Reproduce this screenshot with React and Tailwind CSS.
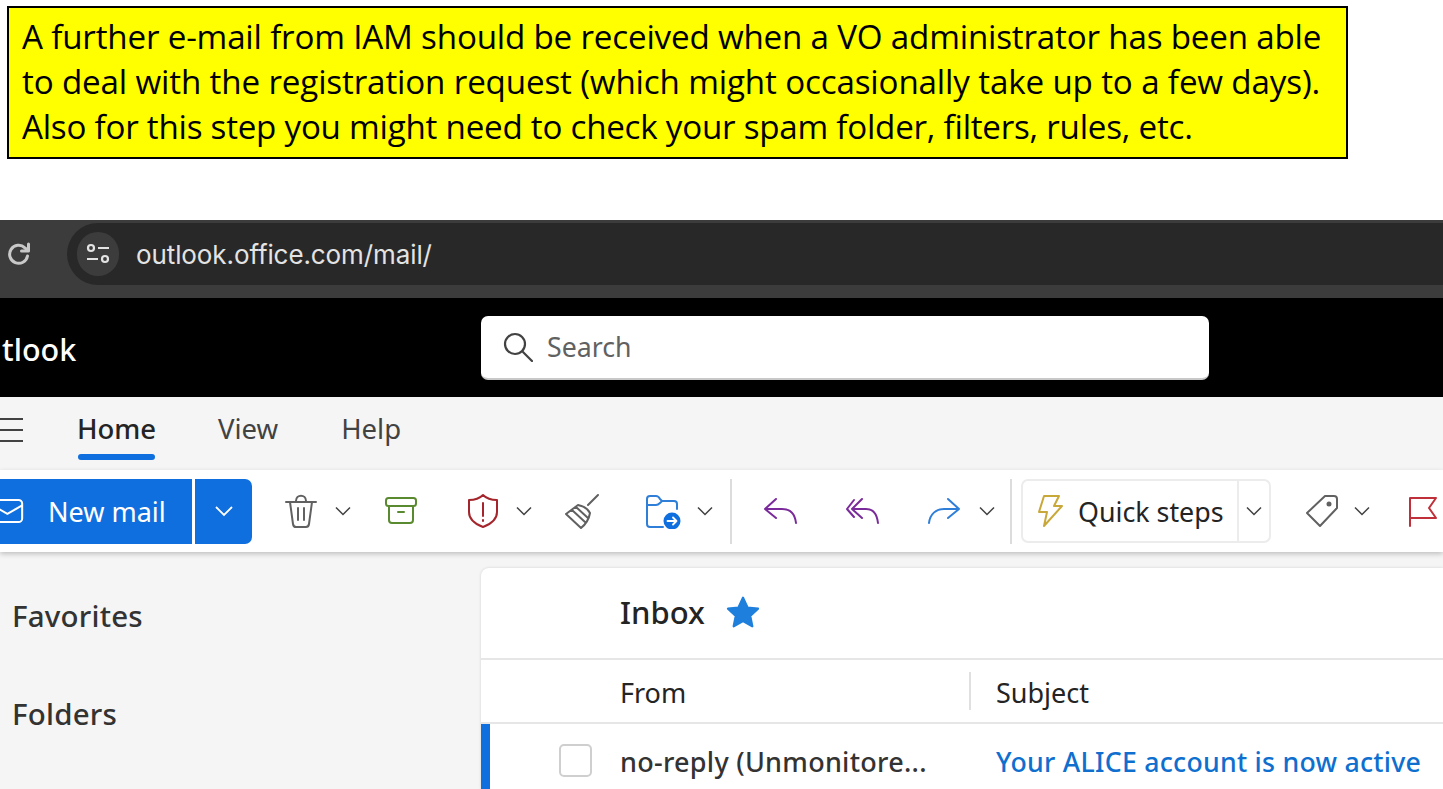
const Chevron = ({ className = 'ml-[17px]', color = '#424242' }) => (
  <svg viewBox="0 0 18 12" className={`h-[12px] w-[18px] shrink-0 ${className}`} fill="none" stroke={color} strokeWidth="1.5">
    <path d="M2 2.5 9 9.5 16 2.5" />
  </svg>
);

const Icon = ({ children, w = 36, h = 36, className = '' }) => (
  <svg viewBox={`0 0 ${w} ${h}`} style={{ width: w, height: h }} className={`shrink-0 ${className}`} fill="none" strokeWidth="2" strokeLinecap="round" strokeLinejoin="round">
    {children}
  </svg>
);

const App = () => (
  <div className="h-[789px] w-[1443px] overflow-hidden bg-white" style={{ fontFamily: '"Noto Sans", "Open Sans", sans-serif' }}>
    <div className="h-[220px] pl-[7px] pt-[6px]">
      <div className="h-[153px] w-[1341px] border-2 border-black bg-[#ffff00] pl-[13px] pt-[6px] text-[33.2px] leading-[45px] text-black whitespace-nowrap" style={{ fontFamily: '"Open Sans", sans-serif' }}>
        <div className="tracking-[-0.2px]">A further e-mail from IAM should be received when a VO administrator has been able</div>
        <div className="tracking-[-0.16px]">to deal with the registration request (which might occasionally take up to a few days).</div>
        <div className="tracking-[-0.25px]">Also for this step you might need to check your spam folder, filters, rules, etc.</div>
      </div>
    </div>

    <div className="flex h-[78px] items-start bg-[#3c3c3c] pt-[3px]">
      <Icon w={24} h={24} className="ml-[7px] mt-[19px]">
        <g stroke="#c9c9c9" strokeWidth="3">
          <path d="M20.5 14a9 9 0 1 1-2.6-8.2L21 8.5" />
          <path d="M21.5 2v7h-7" />
        </g>
      </Icon>
      <div className="ml-[36px] flex h-[62px] flex-1 items-center rounded-l-[31px] bg-[#282828] pl-[10px]">
        <div className="grid h-[44px] w-[42px] place-items-center rounded-full bg-[#3c3c3c]">
          <svg viewBox="0 0 26 22" className="h-[22px] w-[26px]" fill="none" stroke="#e3e3e3" strokeWidth="2.2">
            <circle cx="6" cy="5" r="3" />
            <path d="M13 5h11M2 16h11" />
            <circle cx="20" cy="16" r="3" />
          </svg>
        </div>
        <span className="ml-[17px] text-[26px] tracking-[-0.1px] text-[#e3e3e3]" style={{ fontFamily: 'Inter, sans-serif' }}>outlook.office.com/mail/</span>
      </div>
    </div>

    <div className="flex h-[99px] items-center bg-black">
      <span className="w-[481px] pl-[2px] pt-[4px] text-[30.500px] font-medium text-white">tlook</span>
      <div className="flex h-[64px] w-[728px] items-center rounded-[7px] border-b-2 border-[#c8c8c8] bg-white pl-[22px]">
        <svg viewBox="0 0 30 30" className="h-[30px] w-[30px]" fill="none" stroke="#424242" strokeWidth="2.2" strokeLinecap="round">
          <circle cx="12" cy="12" r="10" />
          <path d="M19.5 19.5 29 29" />
        </svg>
        <span className="ml-[14px] pt-[2px] text-[26.700px] text-[#616161]">Search</span>
      </div>
    </div>

    <div className="flex h-[73px] items-start bg-[#f5f5f5] text-[27.500px] text-[#424242]">
      <div className="mt-[21px] flex h-[24px] w-[23px] flex-col justify-between">
        <div className="h-[2px] bg-[#424242]" />
        <div className="h-[2px] bg-[#424242]" />
        <div className="h-[2px] bg-[#424242]" />
      </div>
      <div className="ml-[55px] flex h-[63px] w-[77px] flex-col items-center">
        <span className="mt-[11px] text-[27.500px] font-medium text-[#242424]">Home</span>
        <div className="mt-[5px] h-[6px] w-[77px] shrink-0 rounded-[3px] bg-[#0f6fde]" />
      </div>
      <span className="ml-[63px] mt-[11px]">View</span>
      <span className="ml-[63px] mt-[11px]">Help</span>
    </div>

    <div className="relative z-10 flex h-[82px] items-center bg-white shadow-[0_2px_5px_rgba(0,0,0,0.22)]">
      <div className="flex h-[65px] w-[192px] items-center bg-[#0f6fde] text-[27px] text-white">
        <svg viewBox="0 0 26 28" className="h-[28px] w-[24px] shrink-0" fill="none" stroke="#fff" strokeWidth="2.2">
          <rect x="-8" y="2" width="32" height="24" rx="4" />
          <path d="M-8 8 8 17 24 8" />
        </svg>
        <span className="ml-[24px] pt-[2px]">New mail</span>
      </div>
      <div className="ml-[3px] grid h-[65px] w-[57px] place-items-center rounded-r-[7px] bg-[#0f6fde]">
        <svg viewBox="0 0 20 12" className="h-[12px] w-[20px]" fill="none" stroke="#fff" strokeWidth="1.8"><path d="M2 2 10 10 18 2" /></svg>
      </div>

      <Icon w={34} h={36} className="ml-[32px]">
        <g stroke="#616161">
          <path d="M2 9h30M12 8c0-7 10-7 10 0M6 9l3 22c.3 2 1.5 3 3 3h10c1.500 0 2.700-1 3-3l3-22M14 15v12M20 15v12" />
        </g>
      </Icon>
      <Chevron className="ml-[16px]" />
      <Icon w={34} h={30} className="ml-[32px]">
        <g stroke="#5a8a2f">
          <rect x="2" y="2" width="30" height="8" rx="2.500" />
          <path d="M5 10v14c0 2 1 3 3 3h18c2 0 3-1 3-3V10M14 16h6" />
        </g>
      </Icon>
      <Icon w={32} h={36} className="ml-[49px]">
        <g stroke="#a4262c">
          <path d="M16 2c4 4 8 5 14 5v12c0 7-6 12-14 15C8 31 2 26 2 19V7c6 0 10-1 14-5ZM16 10v13M16 27v1" />
        </g>
      </Icon>
      <Chevron className="ml-[16px]" />
      <Icon w={36} h={36} className="ml-[31px]">
        <g stroke="#616161">
          <path d="M34 2 24 12M2 21 14 12c5 1 10 4 12 8-1 6-4 11-9 15L2 21ZM8 17l13 12M12 14l12 11" />
        </g>
      </Icon>
      <Icon w={38} h={36} className="ml-[45px]">
        <path d="M2 12V6c0-2 1-3 3-3h6c2 0 3 1 4 3l2 2h12c2 0 3 1 3 3v5M2 12h9c2 0 3-1 4-2l2-2M2 12v19c0 2 1 3 3 3h13" stroke="#2f7ed8" />
        <circle cx="27" cy="28" r="8.500" fill="#0f6fde" />
        <path d="M22.500 28h9M28 24.500l3.500 3.500-3.500 3.500" stroke="#fff" strokeWidth="1.800" />
      </Icon>
      <Chevron className="ml-[13px]" />
      <div className="ml-[16px] h-[65px] w-[2px] bg-[#dcdcdc]" />
      <Icon w={36} h={28} className="ml-[31px]">
        <path d="M13 2 2 12l11 9M2 12h17c8 0 13 5 14 14" stroke="#7a2a9b" />
      </Icon>
      <Icon w={36} h={28} className="ml-[46px]">
        <g stroke="#7a2a9b">
          <path d="M9 3 2 12l7 8M17 2 7 12l10 9M7 12h14c7 0 11 5 12 14" />
        </g>
      </Icon>
      <Icon w={34} h={28} className="ml-[46px]">
        <path d="M21 2l11 10-11 9M32 12H17C9 12 3 17 2 26" stroke="#2f7ed8" />
      </Icon>
      <Chevron className="ml-[17px]" />
      <div className="ml-[14px] h-[65px] w-[2px] bg-[#dcdcdc]" />
      <div className="ml-[9px] flex h-[64px] w-[250px] items-center rounded-[7px] border-2 border-[#ececec]">
        <Icon w={26} h={34} className="ml-[14px]">
          <path d="M7 2h15l-5 10h8L7 32l3-14H2L7 2Z" stroke="#c9a83a" />
        </Icon>
        <span className="ml-[15px] pt-[2px] text-[26.800px] text-[#242424]">Quick steps</span>
        <div className="ml-[14px] flex h-full items-center border-l-2 border-[#ececec] pl-[6px]">
          <Chevron className="" />
        </div>
      </div>
      <Icon w={34} h={34} className="ml-[34px]">
        <path d="M20 2h9c2 0 3 1 3 3v9L15 32 2 19 20 2Z" stroke="#616161" />
        <circle cx="24" cy="10" r="1.500" fill="#616161" stroke="#616161" />
      </Icon>
      <Chevron className="ml-[14px]" />
      <Icon w={30} h={32} className="ml-[37px]">
        <path d="M2 31V3h26l-7 10 7 10H2" stroke="#c0303a" />
      </Icon>
    </div>

    <div className="flex h-[237px] bg-[#f5f5f5]">
      <div className="w-[481px] pl-[12px] pt-[42px] text-[29.500px] font-medium tracking-[0.2px] text-[#333333]">
        <div>Favorites</div>
        <div className="mt-[54px]">Folders</div>
      </div>
      <div className="mt-[16px] flex-1 rounded-tl-[8px] bg-white shadow-[0_0_3px_rgba(0,0,0,0.15)]">
        <div className="flex h-[92px] items-center border-b-2 border-[#e6e6e6] pb-[2px] pl-[139px]">
          <span className="text-[31px] font-medium text-[#242424]">Inbox</span>
          <svg viewBox="0 0 24 24" className="ml-[20px] h-[36px] w-[36px]" fill="#1f7fdc" stroke="#1f7fdc" strokeWidth="1.500" strokeLinejoin="round">
            <path d="M12 2.500 15 9l7 .8-5.200 4.800L18.200 21.500 12 18l-6.200 3.500 1.400-6.900L2 9.800 9 9l3-6.500Z" />
          </svg>
        </div>
        <div className="flex h-[64px] items-center border-b-2 border-[#e6e6e6] text-[27px] text-[#242424]">
          <span className="w-[488px] pl-[139px] pt-[4px]">From</span>
          <div className="h-[38px] w-[2px] bg-[#e0e0e0]" />
          <span className="ml-[25px] pt-[4px]">Subject</span>
        </div>
        <div className="flex h-[65px] items-center border-l-[9px] border-[#0f6fde] pt-[12px]">
          <div className="mb-[4px] ml-[69px] h-[33px] w-[33px] rounded-[5px] border-2 border-[#cfcfcf]" />
          <span className="ml-[28px] w-[376px] text-[27px] font-medium tracking-[0.27px] text-[#333333]">no-reply (Unmonitore...</span>
          <span className="text-[26.700px] font-medium tracking-[0.25px] text-[#0f6fcf]">Your ALICE account is now active</span>
        </div>
      </div>
    </div>
  </div>
);

export default App;
